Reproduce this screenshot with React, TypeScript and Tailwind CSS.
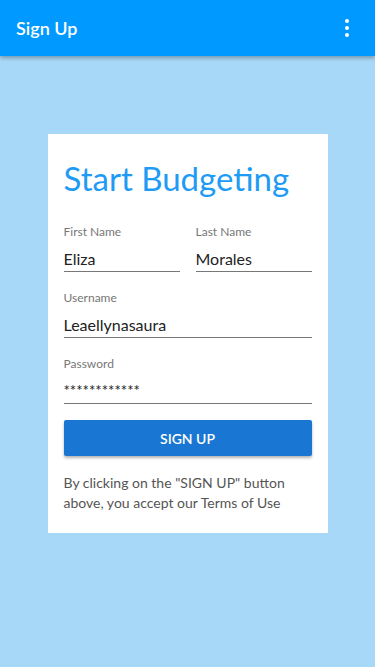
export default function App() {
  return (
    <div className="min-h-[667px] w-full bg-[#a8d8f8]" style={{ fontFamily: "Lato, 'Open Sans', sans-serif" }}>
      {/* App bar */}
      <div className="flex h-14 items-center justify-between bg-[#0099ff] pl-4 pr-[26px] shadow-[0_2px_4px_rgba(0,0,0,0.3)]">
        <span className="text-[18px] font-semibold text-white">Sign Up</span>
        <div className="flex flex-col gap-[3px]">
          <span className="h-[4px] w-[4px] rounded-full bg-white" />
          <span className="h-[4px] w-[4px] rounded-full bg-white" />
          <span className="h-[4px] w-[4px] rounded-full bg-white" />
        </div>
      </div>

      {/* Card */}
      <div className="mx-auto mt-[78px] w-[280px] bg-white px-4 pb-5 pt-[24px]">
        <h1 className="text-[33px] leading-[40px] text-[#1e9bf5]">Start Budgeting</h1>

        <div className="mt-[26px] grid grid-cols-2 gap-4">
          <Field label="First Name" value="Eliza" />
          <Field label="Last Name" value="Morales" />
        </div>
        <div className="mt-[18px]">
          <Field label="Username" value="Leaellynasaura" />
        </div>
        <div className="mt-[18px]">
          <Field label="Password" value="************" small />
        </div>

        <button className="mt-4 flex h-9 w-full items-center justify-center rounded-[2px] bg-[#1976d2] text-[14px] font-semibold text-white shadow-[0_2px_3px_rgba(0,0,0,0.3)]">
          SIGN UP
        </button>

        <p className="mt-[17px] text-[14px] leading-[20px] text-[#555]">
          By clicking on the "SIGN UP" button above, you accept our Terms of Use
        </p>
      </div>
    </div>
  )
}

function Field({ label, value, small }: { label: string; value: string; small?: boolean }) {
  return (
    <div>
      <div className="text-[12px] leading-[16px] text-[#777]">{label}</div>
      <div className={`mt-[6px] flex h-[26px] items-center border-b border-[#777] text-[#222] ${small ? "text-[15px]" : "text-[16px]"}`}>
        {value}
      </div>
    </div>
  )
}
